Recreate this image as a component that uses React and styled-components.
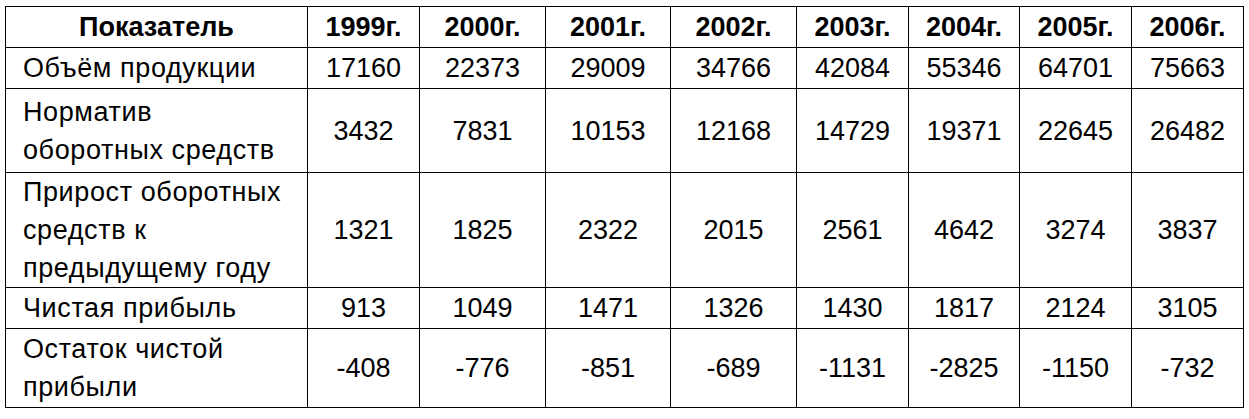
import React from 'react';
import styled, { createGlobalStyle } from 'styled-components';

const Global = createGlobalStyle`
  body {
    margin: 0;
    background: #fff;
    font-family: "Liberation Sans", Arial, sans-serif;
    color: #000;
  }
`;

const Page = styled.div`
  padding: 6px 5px;
`;

const Table = styled.table`
  border-collapse: collapse;
  table-layout: fixed;
  width: 1238px;
  font-size: 27px;
  line-height: 38px;
`;

const HeadCell = styled.th`
  border: 1px solid #000;
  font-weight: bold;
  text-align: center;
  padding: 0;
  height: ${(p) => p.h}px;
`;

const LabelCell = styled.td`
  border: 1px solid #000;
  text-align: left;
  padding: 0 6px 0 17px;
  letter-spacing: 0.6px;
  vertical-align: middle;
  white-space: nowrap;
  height: ${(p) => p.h}px;
`;

const ValueCell = styled.td`
  border: 1px solid #000;
  text-align: center;
  padding: 0;
  vertical-align: middle;
`;

const widths = [302, 112, 126, 125, 126, 112, 111, 112, 112];
const years = ['1999г.', '2000г.', '2001г.', '2002г.', '2003г.', '2004г.', '2005г.', '2006г.'];

const rows = [
  { label: ['Объём продукции'], h: 40, values: [17160, 22373, 29009, 34766, 42084, 55346, 64701, 75663] },
  { label: ['Норматив', 'оборотных средств'], h: 83, values: [3432, 7831, 10153, 12168, 14729, 19371, 22645, 26482] },
  { label: ['Прирост оборотных', 'средств к', 'предыдущему году'], h: 114, values: [1321, 1825, 2322, 2015, 2561, 4642, 3274, 3837] },
  { label: ['Чистая прибыль'], h: 40, values: [913, 1049, 1471, 1326, 1430, 1817, 2124, 3105] },
  { label: ['Остаток чистой', 'прибыли'], h: 78, values: [-408, -776, -851, -689, -1131, -2825, -1150, -732] },
];

const App = () => (
  <Page>
    <Global />
    <Table>
      <colgroup>
        {widths.map((w, i) => <col key={i} style={{ width: w }} />)}
      </colgroup>
      <thead>
        <tr>
          <HeadCell h={40}>Показатель</HeadCell>
          {years.map((y) => <HeadCell key={y} h={40}>{y}</HeadCell>)}
        </tr>
      </thead>
      <tbody>
        {rows.map((r) => (
          <tr key={r.label[0]}>
            <LabelCell h={r.h}>
              {r.label.map((l, i) => <div key={i}>{l}</div>)}
            </LabelCell>
            {r.values.map((v, i) => <ValueCell key={i}>{v}</ValueCell>)}
          </tr>
        ))}
      </tbody>
    </Table>
  </Page>
);

export default App;
